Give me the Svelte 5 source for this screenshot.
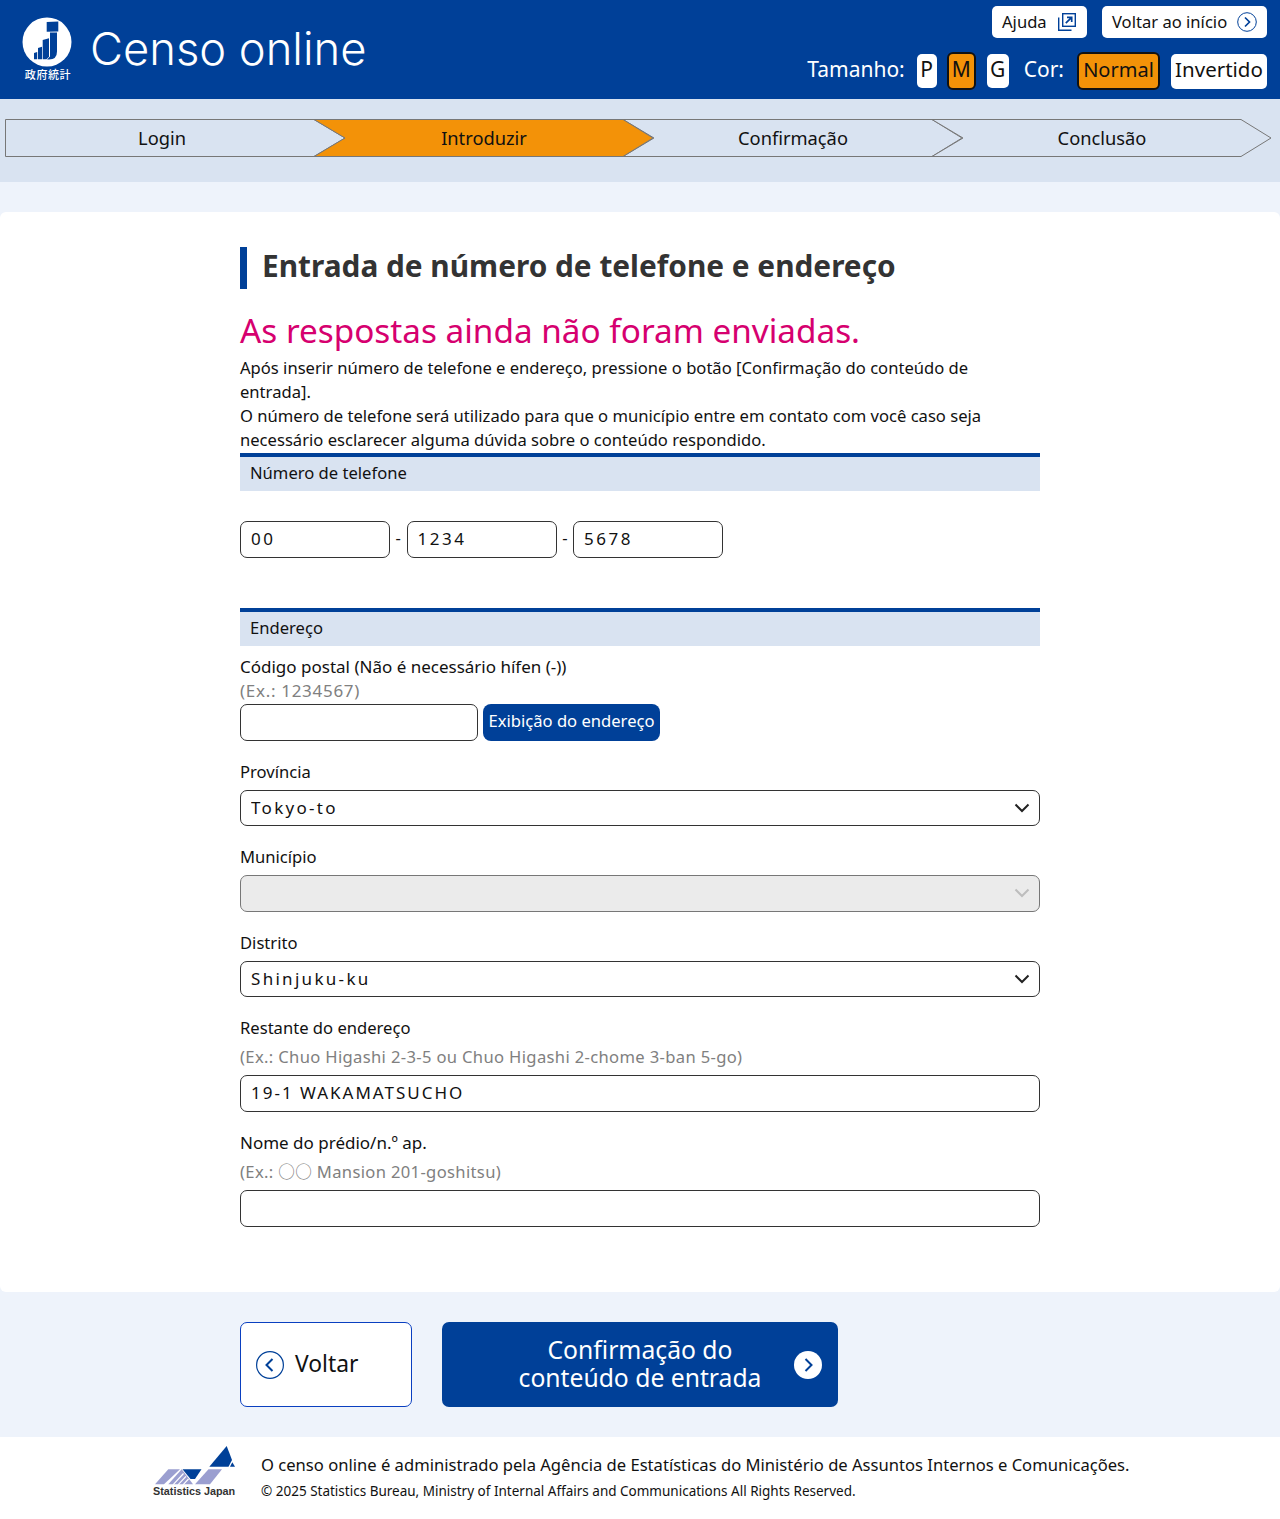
<script>
  const steps = [
    { label: 'Login', first: true },
    { label: 'Introduzir', active: true },
    { label: 'Confirmação' },
    { label: 'Conclusão' }
  ];
</script>

<div class="page">
  <header class="top">
    <div class="brand">
      <div class="logo">
        <svg width="50" height="50" viewBox="0 0 50 50" aria-hidden="true">
          <circle cx="25" cy="25" r="24.5" fill="#fff" />
          <path d="M24.700 5l11.600-.6v10l-11.600.4z" fill="#004098" />
          <path d="M28 15.500h7v19q0 8-8 8h-2l3-3z" fill="#004098" />
          <path d="M20.700 23l6.300-1.800v18.500l-2.500 2.600h-3.800z" fill="#004098" />
          <path d="M16 31l4-1.300v12.600h-4z" fill="#004098" />
          <path d="M12 36l3.200-1v7.300h-3.200z" fill="#004098" />
        </svg>
        <span class="seal">政府統計</span>
      </div>
      <h1>Censo online</h1>
    </div>
    <div class="tools">
      <div class="links">
        <a class="link help">Ajuda
          <svg width="20" height="20" viewBox="0 0 20 20" fill="none" stroke="#004098" stroke-width="1.400" aria-hidden="true">
            <rect x="5.700" y="1.700" width="12.600" height="12.600" />
            <path d="M1.700 5.500v12.800h12.800" />
            <path d="M8.800 11.200l5.600-5.600M10 5.300h4.700v4.700" stroke-width="1.700" />
          </svg>
        </a>
        <a class="link home">Voltar ao início
          <svg width="20" height="20" viewBox="0 0 20 20" fill="none" stroke="#004098" aria-hidden="true">
            <circle cx="10" cy="10" r="9.300" stroke-width="1" />
            <path d="M8 5.500l4.500 4.500-4.500 4.500" stroke-width="1.700" />
          </svg>
        </a>
      </div>
      <div class="switches">
        <span class="cap">Tamanho:</span>
        <button class="sw p">P</button>
        <button class="sw on m">M</button>
        <button class="sw g">G</button>
        <span class="cap cor">Cor:</span>
        <button class="sw on normal">Normal</button>
        <button class="sw inv">Invertido</button>
      </div>
    </div>
  </header>

  <nav class="band">
    <ol class="steps">
      {#each steps as s}
        <li class="step" class:first={s.first} class:active={s.active}>
          <svg class="shape" width="340" height="38" viewBox="0 0 340 38" aria-hidden="true">
            {#if s.first}
              <polygon points="0.500,0.500 309,0.500 340,19 309,37.500 0.500,37.500" />
            {:else}
              <polygon points="0,0.500 309,0.500 339,19 309,37.500 0,37.500 31,19" />
            {/if}
          </svg>
          <span>{s.label}</span>
        </li>
      {/each}
    </ol>
  </nav>

  <main class="shell">
    <section class="card">
      <div class="inner">
        <h2>Entrada de número de telefone e endereço</h2>
        <p class="alert">As respostas ainda não foram enviadas.</p>
        <p class="intro">Após inserir número de telefone e endereço, pressione o botão [Confirmação do conteúdo de entrada].<br />O número de telefone será utilizado para que o município entre em contato com você caso seja necessário esclarecer alguma dúvida sobre o conteúdo respondido.</p>

        <h3>Número de telefone</h3>
        <div class="phone">
          <input value="00" /><span>-</span><input value="1234" /><span>-</span><input value="5678" />
        </div>

        <h3 class="addr">Endereço</h3>
        <label class="l zip">Código postal (Não é necessário hífen (-))</label>
        <div class="ex zipex">(Ex.: 1234567)</div>
        <div class="ziprow">
          <input class="zipin" />
          <button class="lookup">Exibição do endereço</button>
        </div>

        <label class="l f1">Província</label>
        <div class="sel">
          <select><option>Tokyo-to</option></select>
          <svg width="16" height="10" viewBox="0 0 16 10" fill="none" stroke="#222" stroke-width="2" aria-hidden="true"><path d="M1.500 1.500l6.500 6.500 6.500-6.500" /></svg>
        </div>

        <label class="l f2">Município</label>
        <div class="sel off">
          <select disabled><option></option></select>
          <svg width="16" height="10" viewBox="0 0 16 10" fill="none" stroke="#bdbdbd" stroke-width="2" aria-hidden="true"><path d="M1.500 1.500l6.500 6.500 6.500-6.500" /></svg>
        </div>

        <label class="l f3">Distrito</label>
        <div class="sel">
          <select><option>Shinjuku-ku</option></select>
          <svg width="16" height="10" viewBox="0 0 16 10" fill="none" stroke="#222" stroke-width="2" aria-hidden="true"><path d="M1.500 1.500l6.500 6.500 6.500-6.500" /></svg>
        </div>

        <label class="l f4">Restante do endereço</label>
        <div class="ex exb">(Ex.: Chuo Higashi 2-3-5 ou Chuo Higashi 2-chome 3-ban 5-go)</div>
        <input class="wide" value="19-1 WAKAMATSUCHO" />

        <label class="l f4 nome">Nome do prédio/n.º ap.</label>
        <div class="ex exb">(Ex.: ○○ Mansion 201-goshitsu)</div>
        <input class="wide" />
      </div>
    </section>

    <div class="actions">
      <button class="back">
        <svg width="28" height="28" viewBox="0 0 28 28" fill="none" stroke="#004098" aria-hidden="true">
          <circle cx="14" cy="14" r="13.400" stroke-width="1.200" />
          <path d="M16.500 8l-6 6 6 6" stroke-width="2" />
        </svg>
        <span>Voltar</span>
      </button>
      <button class="next">
        <span>Confirmação do<br />conteúdo de entrada</span>
        <svg width="28" height="28" viewBox="0 0 28 28" aria-hidden="true">
          <circle cx="14" cy="14" r="14" fill="#fff" />
          <path d="M11.500 8l6 6-6 6" fill="none" stroke="#004098" stroke-width="2" />
        </svg>
      </button>
    </div>
  </main>

  <footer class="foot">
    <div class="mark">
      <svg width="84" height="40" viewBox="0 0 84 40" aria-hidden="true">
        <polygon points="56.300,21.700 73.700,1 79,15 75.500,21.700" fill="#004098" />
        <polygon points="77,21.700 82,21.700 79.300,17.300" fill="#004098" />
        <polygon points="2,39.300 15.300,24.300 27,24.300 11,39.300" fill="#9b9fd0" />
        <polygon points="28.700,24.300 15.300,39.300 40,39.300" fill="#9b9fd0" />
        <path d="M20 39.800l10.500-11.300M25 39.800l8-8.500M30 39.800l5.500-5.800" stroke="#fff" stroke-width="1.200" />
        <polygon points="29.500,24.300 48.500,24.300 42,34 37.500,34" fill="#004098" />
        <polygon points="42,39.300 55.500,24.300 69,24.300 57,39.300" fill="#9b9fd0" />
      </svg>
      <span>Statistics Japan</span>
    </div>
    <div class="ftext">
      <p class="f-a">O censo online é administrado pela Agência de Estatísticas do Ministério de Assuntos Internos e Comunicações.</p>
      <p class="f-b">© 2025 Statistics Bureau, Ministry of Internal Affairs and Communications All Rights Reserved.</p>
    </div>
  </footer>
</div>

<style>
  :global(body) {
    margin: 0;
    background: #fff;
  }
  .page {
    font-family: "Noto Sans", "Noto Sans CJK JP", sans-serif;
    font-size: 16.600px;
    line-height: 24px;
    color: #111;
    width: 1280px;
  }
  button, input, select {
    font-family: inherit;
    box-sizing: border-box;
    color: #111;
  }
  .top {
    height: 99px;
    background: #004098;
    display: flex;
    justify-content: space-between;
    box-sizing: border-box;
    padding: 6px 13px 0 22px;
  }
  .brand {
    display: flex;
    align-items: flex-start;
  }
  .logo {
    width: 50px;
    display: flex;
    flex-direction: column;
    align-items: center;
    padding-top: 11px;
  }
  .logo svg {
    display: block;
  }
  .seal {
    color: #fff;
    font-size: 11px;
    line-height: 13px;
    font-weight: 500;
    letter-spacing: 0.6px;
    white-space: nowrap;
    margin: 1px 0 0 2px;
  }
  h1 {
    margin: 14px 0 0 18px;
    font-family: Inter, sans-serif;
    font-weight: 300;
    font-size: 45.300px;
    line-height: 58px;
    color: #fff;
  }
  .tools {
    display: flex;
    flex-direction: column;
    align-items: flex-end;
  }
  .links {
    display: flex;
    gap: 15px;
  }
  .link {
    height: 32px;
    background: #fff;
    border-radius: 5px;
    display: flex;
    align-items: center;
    justify-content: space-between;
    box-sizing: border-box;
    padding: 0 10px;
  }
  .help { width: 95px; }
  .home { width: 165px; }
  .switches {
    display: flex;
    align-items: center;
    margin-top: 14px;
    color: #fff;
    font-size: 21px;
  }
  .cap {
    margin: 0 12px 4px 0;
  }
  .cor {
    margin-left: 15px;
    margin-right: 13px;
  }
  .sw {
    font-size: 21px;
    height: 34px;
    background: #fff;
    border: 0;
    border-radius: 5px;
    padding: 0 0 3px;
    line-height: 1;
  }
  .sw.on {
    background: #f39208;
    border: 2px solid #111;
    height: 38px;
    border-radius: 6px;
  }
  .sw.p { width: 20px; }
  .sw.m { width: 29px; margin: 0 11px 0 10px; }
  .sw.g { width: 22px; }
  .sw.normal { width: 83px; margin-right: 11px; font-size: 20px; }
  .sw.inv { width: 96px; height: 35px; font-size: 20.500px; }
  .band {
    height: 83px;
    background: #d9e3f1;
    box-sizing: border-box;
    padding: 20px 0 0 5px;
  }
  .steps {
    list-style: none;
    margin: 0;
    padding: 0;
    display: flex;
  }
  .step {
    position: relative;
    width: 340px;
    height: 38px;
    margin-left: -31px;
    display: flex;
    align-items: center;
    justify-content: center;
    font-size: 18.300px;
  }
  .step.first {
    margin-left: 0;
    padding-right: 26px;
    box-sizing: border-box;
  }
  .step.active {
    z-index: 1;
  }
  .step span {
    position: relative;
  }
  .shape {
    position: absolute;
    left: 0;
    top: 0;
  }
  .shape polygon {
    fill: #d9e3f1;
    stroke: #777;
    stroke-width: 1;
  }
  .active .shape polygon {
    fill: #f39208;
  }
  .shell {
    background: #eef3fb;
    padding-top: 30px;
  }
  .card {
    background: #fff;
    border-radius: 6px;
    height: 1080px;
    box-sizing: border-box;
    padding-top: 35px;
  }
  .inner {
    width: 800px;
    margin: 0 auto;
  }
  h2 {
    margin: 0;
    border-left: 7px solid #004098;
    padding: 0 0 4px 15px;
    height: 42px;
    box-sizing: border-box;
    font-size: 29.800px;
    line-height: 38px;
    font-weight: 700;
    color: #333;
  }
  .alert {
    margin: 19px 0 0;
    font-size: 33.300px;
    line-height: 44px;
    color: #d6006f;
  }
  .intro {
    margin: 4px 0 0;
  }
  h3 {
    margin: 1px 0 0;
    border-top: 4px solid #004098;
    background: #d9e3f1;
    height: 38px;
    box-sizing: border-box;
    padding: 4px 10px 0;
    font-weight: 400;
    font-size: 16.600px;
    line-height: 24px;
  }
  .phone {
    display: flex;
    align-items: center;
    gap: 5.600px;
    margin-top: 30px;
  }
  input, select {
    height: 37px;
    border: 1px solid #333;
    border-radius: 7px;
    background: #fff;
    padding: 0 10px 2px;
    font-size: 17px;
    letter-spacing: 2px;
  }
  .phone input {
    width: 150px;
    letter-spacing: 2.500px;
  }
  .phone span {
    margin-bottom: 3px;
  }
  h3.addr {
    margin-top: 50px;
  }
  .l {
    display: block;
  }
  .zip { margin-top: 9px; font-size: 17px; }
  .ex {
    color: #808080;
    letter-spacing: 0.340px;
  }
  .zipex {
    font-size: 17px;
    letter-spacing: 0.700px;
  }
  .ziprow {
    display: flex;
    gap: 5px;
    margin-top: 1px;
  }
  .zipin { width: 238px; }
  .lookup {
    width: 177px;
    height: 37px;
    background: #004098;
    color: #fff;
    border: 0;
    border-radius: 8px;
    padding: 0 0 4px;
    font-size: 16.600px;
  }
  .f1, .f2, .f3, .f4 { margin-top: 19px; }
  .nome { font-size: 17px; }
  .sel {
    position: relative;
    margin-top: 6px;
  }
  .sel select {
    display: block;
    width: 100%;
    height: 36px;
    appearance: none;
    letter-spacing: 2.300px;
  }
  .sel svg {
    position: absolute;
    right: 10px;
    top: 13px;
  }
  .sel.off select {
    height: 37px;
    background: #ebebeb;
    border-color: #777;
    opacity: 1;
  }
  .exb {
    margin-top: 5px;
    margin-bottom: 6px;
  }
  .wide {
    display: block;
    width: 100%;
  }
  .actions {
    height: 145px;
    box-sizing: border-box;
    padding: 30px 0 0 240px;
    display: flex;
    gap: 30px;
  }
  .back, .next {
    height: 85px;
    border-radius: 7px;
    display: flex;
    align-items: center;
  }
  .back {
    width: 172px;
    background: #fff;
    border: 1px solid #0a3fc0;
    padding: 0 0 0 15px;
    gap: 11px;
    font-size: 22.800px;
  }
  .back span {
    margin-bottom: 2px;
  }
  .next {
    width: 396px;
    background: #004098;
    border: 0;
    color: #fff;
    padding: 0 16px 0 0;
    font-size: 24.700px;
    line-height: 28px;
  }
  .next span {
    flex: 1;
    text-align: center;
    padding: 0 0 1px 44px;
  }
  .foot {
    height: 82px;
    background: #fff;
    box-sizing: border-box;
    padding: 8px 0 0 153px;
    display: flex;
    gap: 25px;
  }
  .mark {
    width: 83px;
    display: flex;
    flex-direction: column;
  }
  .mark svg {
    display: block;
  }
  .mark span {
    font-family: "Liberation Sans", sans-serif;
    font-weight: 700;
    font-size: 10.800px;
    line-height: 12px;
    color: #333;
    white-space: nowrap;
  }
  .ftext p {
    margin: 0;
  }
  .f-a {
    padding-top: 8px;
  }
  .f-b {
    font-size: 13.500px;
    padding-top: 2px;
  }
</style>
